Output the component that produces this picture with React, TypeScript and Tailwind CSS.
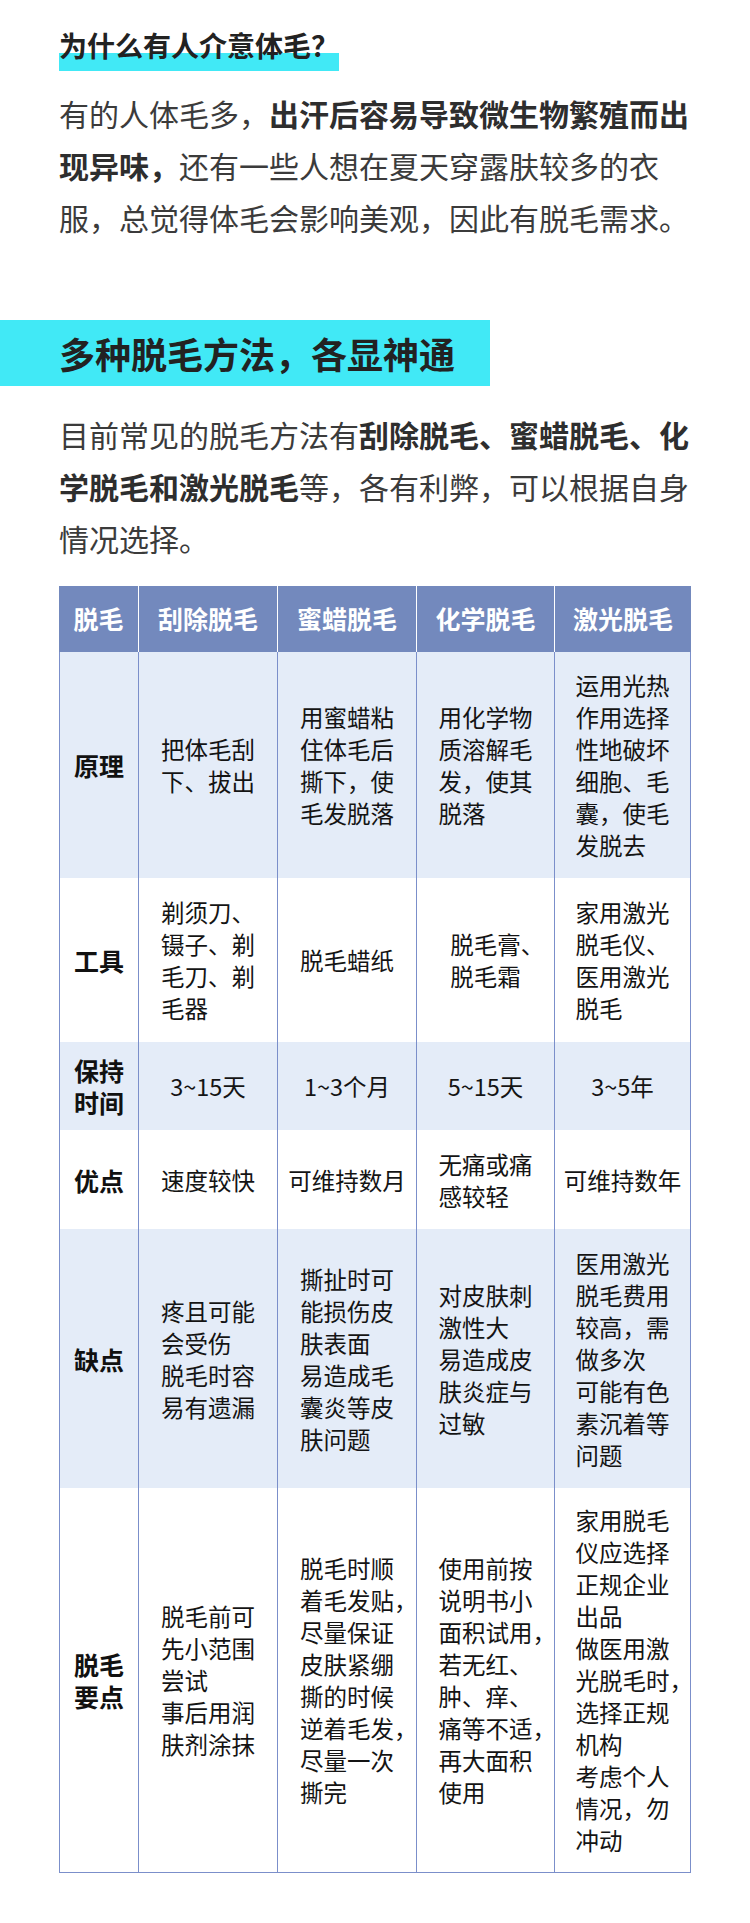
const ROWS = [
  {
    label: ["原理"],
    rowClass: "h-[226px] bg-[#e4ecf8]",
    cells: [
      ["把体毛刮", "下、拔出"],
      ["用蜜蜡粘", "住体毛后", "撕下，使", "毛发脱落"],
      ["用化学物", "质溶解毛", "发，使其", "脱落"],
      ["运用光热", "作用选择", "性地破坏", "细胞、毛", "囊，使毛", "发脱去"],
    ],
  },
  {
    label: ["工具"],
    rowClass: "h-[164px] bg-white",
    cells: [
      ["剃须刀、", "镊子、剃", "毛刀、剃", "毛器"],
      ["脱毛蜡纸"],
      ["脱毛膏、", "脱毛霜"],
      ["家用激光", "脱毛仪、", "医用激光", "脱毛"],
    ],
  },
  {
    label: ["保持", "时间"],
    rowClass: "h-[88px] bg-[#e4ecf8]",
    cells: [["3~15天"], ["1~3个月"], ["5~15天"], ["3~5年"]],
  },
  {
    label: ["优点"],
    rowClass: "h-[99px] bg-white",
    cells: [["速度较快"], ["可维持数月"], ["无痛或痛", "感较轻"], ["可维持数年"]],
  },
  {
    label: ["缺点"],
    rowClass: "h-[259px] bg-[#e4ecf8]",
    cells: [
      ["疼且可能", "会受伤", "脱毛时容", "易有遗漏"],
      ["撕扯时可", "能损伤皮", "肤表面", "易造成毛", "囊炎等皮", "肤问题"],
      ["对皮肤刺", "激性大", "易造成皮", "肤炎症与", "过敏"],
      ["医用激光", "脱毛费用", "较高，需", "做多次", "可能有色", "素沉着等", "问题"],
    ],
  },
  {
    label: ["脱毛", "要点"],
    rowClass: "h-[385px] bg-white",
    cells: [
      ["脱毛前可", "先小范围", "尝试", "事后用润", "肤剂涂抹"],
      ["脱毛时顺", "着毛发贴，", "尽量保证", "皮肤紧绷", "撕的时候", "逆着毛发，", "尽量一次", "撕完"],
      ["使用前按", "说明书小", "面积试用，", "若无红、", "肿、痒、", "痛等不适，", "再大面积", "使用"],
      [
        "家用脱毛",
        "仪应选择",
        "正规企业",
        "出品",
        "做医用激",
        "光脱毛时，",
        "选择正规",
        "机构",
        "考虑个人",
        "情况，勿",
        "冲动",
      ],
    ],
  },
];

const HEADERS = ["脱毛", "刮除脱毛", "蜜蜡脱毛", "化学脱毛", "激光脱毛"];
const COL_WIDTHS = ["w-[79px]", "w-[139px]", "w-[139px]", "w-[138px]", "w-[137px]"];

// trailing comma / 顿号 hangs outside the text block, like the source layout
function Line({ text }: { text: string }) {
  const last = text.slice(-1);
  if (text.length > 1 && (last === "，" || last === "、")) {
    return (
      <span className="block whitespace-nowrap">
        {text.slice(0, -1)}
        <span className="inline-block w-0 overflow-visible">{last}</span>
      </span>
    );
  }
  return <span className="block whitespace-nowrap">{text}</span>;
}

function MethodsTable() {
  return (
    <table className="w-[632px] table-fixed border-separate border-spacing-0">
      <thead>
        <tr className="h-[66px] bg-[#7389bd]">
          {HEADERS.map((h, i) => (
            <th
              key={h + i}
              className={
                COL_WIDTHS[i] +
                " p-0 text-center align-middle text-[25px] font-bold text-white " +
                (i > 0 ? "border-l border-white" : "")
              }
            >
              {h}
            </th>
          ))}
        </tr>
      </thead>
      <tbody>
        {ROWS.map((row, r) => {
          const last = r === ROWS.length - 1;
          return (
            <tr key={r} className={row.rowClass}>
              <td
                className={
                  "border-l border-[#7b8fca] p-0 text-center align-middle text-[25px] font-bold leading-[32px] text-[#111] " +
                  (last ? "border-b" : "")
                }
              >
                {row.label.map((l) => (
                  <span key={l} className="block">
                    {l}
                  </span>
                ))}
              </td>
              {row.cells.map((lines, c) => (
                <td
                  key={c}
                  className={
                    "border-l border-[#7b8fca] p-0 text-center align-middle text-[23.5px] leading-[32px] text-[#141414] " +
                    (c === row.cells.length - 1 ? "border-r " : "") +
                    (last ? "border-b" : "")
                  }
                >
                  <div className="inline-block text-left">
                    {lines.map((line, i) => (
                      <Line key={i} text={line} />
                    ))}
                  </div>
                </td>
              ))}
            </tr>
          );
        })}
      </tbody>
    </table>
  );
}

export default function App() {
  return (
    <div className="min-h-[1923px] w-[750px] bg-white pt-[19px] pb-[51px] font-['Noto_Sans_CJK_SC','Noto_Sans',sans-serif]">
      {/* Why people care */}
      <div className="px-[59px] leading-[52px]">
        <span className="inline-block bg-[linear-gradient(transparent_34px,#41e9f6_34px)] text-[28px] font-bold text-[#222]">
          为什么有人介意体毛？
        </span>
      </div>
      <p className="mt-[11px] px-[59px] text-[30px] leading-[52px] text-[#3b3b3b]">
        有的人体毛多，
        <b className="font-bold text-[#2e2e2e]">出汗后容易导致微生物繁殖而出现异味，</b>
        还有一些人想在夏天穿露肤较多的衣服，总觉得体毛会影响美观，因此有脱毛需求。
      </p>

      {/* Section band */}
      <div className="mt-[77px] flex h-[66px] w-[490px] items-center bg-[#41e9f6] pl-[59px]">
        <h2 className="text-[36px] font-bold leading-none text-[#222]">多种脱毛方法，各显神通</h2>
      </div>

      <p className="mt-[22px] px-[59px] text-[30px] leading-[52px] text-[#3b3b3b]">
        目前常见的脱毛方法有
        <b className="font-bold text-[#2e2e2e]">刮除脱毛、蜜蜡脱毛、化学脱毛和激光脱毛</b>
        等，各有利弊，可以根据自身情况选择。
      </p>

      <div className="mt-[22px] px-[59px]">
        <MethodsTable />
      </div>
    </div>
  );
}
